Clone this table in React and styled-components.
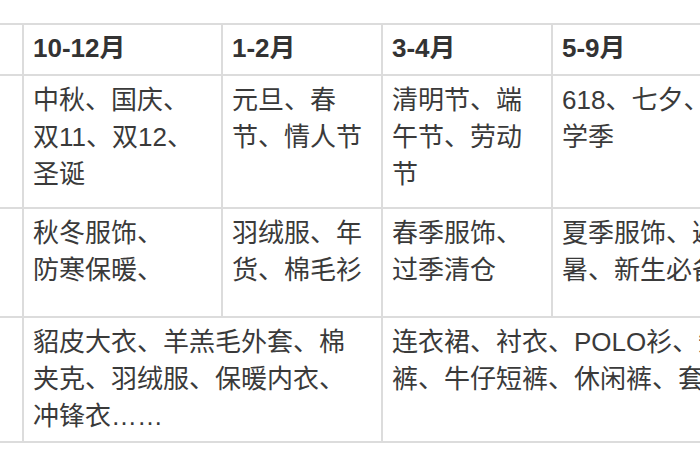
import React from 'react';
import styled, { createGlobalStyle } from 'styled-components';

const GlobalStyle = createGlobalStyle`
  body {
    margin: 0;
    background: #ffffff;
    overflow: hidden;
  }
`;

const Page = styled.div`
  width: 700px;
  height: 470px;
  overflow: hidden;
  padding-top: 23px;
  box-sizing: border-box;
`;

const Table = styled.table`
  border-collapse: collapse;
  table-layout: fixed;
  width: 742px;
  font-family: "Liberation Sans", "Noto Sans CJK SC", sans-serif;
  font-size: 26px;
  color: #3a3a3a;
`;

const Col = styled.col`
  width: ${(p) => p.$w}px;
`;

const Row = styled.tr`
  height: ${(p) => p.$h}px;
`;

const Cell = styled.td`
  border: 2px solid #dcdcdc;
  padding: 6px 9px;
  vertical-align: top;
  line-height: 37px;
  white-space: nowrap;
  overflow: hidden;

  &:first-child {
    border-left: none;
    padding: 0;
  }
`;

const HeadCell = styled(Cell).attrs({ as: 'th' })`
  font-weight: bold;
  text-align: left;
  vertical-align: middle;
  color: #333333;
  padding-top: 0;
  padding-bottom: 2px;
`;

const columns = [199, 160, 170, 190];

const months = ['10-12月', '1-2月', '3-4月', '5-9月'];

const festivals = [
  ['中秋、国庆、', '双11、双12、', '圣诞'],
  ['元旦、春', '节、情人节'],
  ['清明节、端', '午节、劳动', '节'],
  ['618、七夕、开', '学季'],
];

const themes = [
  ['秋冬服饰、', '防寒保暖、'],
  ['羽绒服、年', '货、棉毛衫'],
  ['春季服饰、', '过季清仓'],
  ['夏季服饰、避', '暑、新生必备'],
];

const products = [
  ['貂皮大衣、羊羔毛外套、棉', '夹克、羽绒服、保暖内衣、', '冲锋衣……'],
  ['连衣裙、衬衣、POLO衫、短', '裤、牛仔短裤、休闲裤、套装'],
];

const Lines = ({ lines }) =>
  lines.map((line, i) => (
    <React.Fragment key={i}>
      {i > 0 && <br />}
      {line}
    </React.Fragment>
  ));

const App = () => {
  return (
    <Page>
      <GlobalStyle />
      <Table>
        <colgroup>
          <Col $w={23} />
          {columns.map((w, i) => (
            <Col key={i} $w={w} />
          ))}
        </colgroup>
        <tbody>
          <Row $h={51}>
            <HeadCell />
            {months.map((m) => (
              <HeadCell key={m}>{m}</HeadCell>
            ))}
          </Row>
          <Row $h={133}>
            <Cell />
            {festivals.map((lines, i) => (
              <Cell key={i}>
                <Lines lines={lines} />
              </Cell>
            ))}
          </Row>
          <Row $h={109}>
            <Cell />
            {themes.map((lines, i) => (
              <Cell key={i}>
                <Lines lines={lines} />
              </Cell>
            ))}
          </Row>
          <Row $h={124}>
            <Cell />
            {products.map((lines, i) => (
              <Cell key={i} colSpan={2}>
                <Lines lines={lines} />
              </Cell>
            ))}
          </Row>
        </tbody>
      </Table>
    </Page>
  );
};

export default App;
